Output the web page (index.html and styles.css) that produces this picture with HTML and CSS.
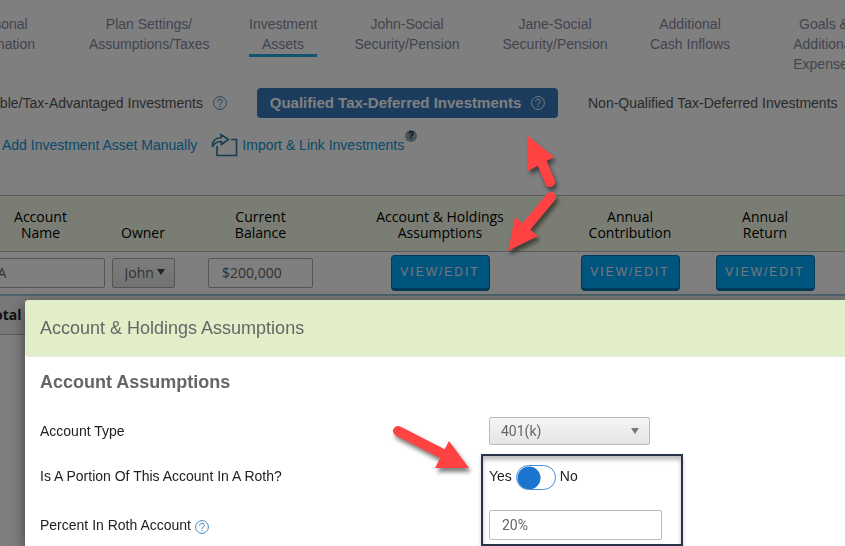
FILE: index.html
```html
<!DOCTYPE html>
<html lang="en">
<head>
    <meta charset="UTF-8">
    <meta name="viewport" content="width=device-width, initial-scale=1.0">
    <title>Investment Assets</title>
    <link rel="stylesheet" href="styles.css">
</head>
<body>
    <svg class="sprite" aria-hidden="true">
        <symbol id="help" viewBox="0 0 14 14">
            <circle cx="7" cy="7" r="6.4" fill="none" stroke="currentColor" stroke-width="0.9"/>
            <path d="M4.6 5.600C4.600 2.600 9.400 2.700 9.400 5.400C9.400 7.200 7 6.900 7 8.800M7 9.800V11" fill="none" stroke="currentColor"/>
        </symbol>
    </svg>

    <main class="page">
        <nav class="steps">
            <a href="#" class="step step-personal">Personal<br>Information</a>
            <a href="#" class="step step-plan">Plan Settings/<br>Assumptions/Taxes</a>
            <a href="#" class="step active">Investment<br>Assets</a>
            <a href="#" class="step step-wide">John-Social<br>Security/Pension</a>
            <a href="#" class="step step-wide">Jane-Social<br>Security/Pension</a>
            <a href="#" class="step step-cash">Additional<br>Cash Inflows</a>
            <a href="#" class="step step-goals">Goals &amp;<br>Additional<br>Expenses</a>
        </nav>

        <div class="tabs">
            <a href="#" class="tab tab-taxable">Taxable/Tax-Advantaged Investments <svg class="help"><use href="#help"/></svg></a>
            <a href="#" class="tab tab-selected">Qualified Tax-Deferred Investments <svg class="help"><use href="#help"/></svg></a>
            <a href="#" class="tab">Non-Qualified Tax-Deferred Investments</a>
        </div>

        <div class="actions">
            <a href="#">Add Investment Asset Manually</a>
            <a href="#" class="import-link">
                <svg class="import-icon" viewBox="0 0 27 24">
                    <path d="M20 6.500H25.500V22.500H6V13" fill="none" stroke="currentColor" stroke-width="1.6"/>
                    <path d="M1.500 14C1 8 4 5 10 4.800V1.500L17.500 6.500L10.500 11.500V8.500C6 8.500 3 10.500 1.500 14Z" fill="none" stroke="currentColor" stroke-width="1.6"/>
                </svg>
                Import &amp; Link Investments
            </a>
            <span class="badge">?</span>
        </div>

        <table class="assets">
            <colgroup>
                <col class="col-name"><col class="col-owner"><col class="col-balance"><col class="col-holdings"><col class="col-contribution"><col class="col-return"><col>
            </colgroup>
            <thead>
                <tr>
                    <th class="name-cell">Account<br>Name</th>
                    <th>Owner</th>
                    <th>Current<br>Balance</th>
                    <th>Account &amp; Holdings<br>Assumptions</th>
                    <th class="contribution-cell">Annual<br>Contribution</th>
                    <th>Annual<br>Return</th>
                    <th></th>
                </tr>
            </thead>
            <tbody>
                <tr>
                    <td class="name-cell"><input class="field name-field" type="text" value="IRA" aria-label="Account name"></td>
                    <td>
                        <span class="select-wrap owner-wrap">
                            <select class="owner-select" aria-label="Owner"><option>John</option></select>
                        </span>
                    </td>
                    <td><input class="field balance-field" type="text" value="$200,000" aria-label="Current balance"></td>
                    <td><button class="view-button">VIEW/EDIT</button></td>
                    <td class="contribution-cell"><button class="view-button">VIEW/EDIT</button></td>
                    <td><button class="view-button">VIEW/EDIT</button></td>
                    <td></td>
                </tr>
            </tbody>
            <tfoot>
                <tr>
                    <td class="total" colspan="7"><span>Total</span></td>
                </tr>
            </tfoot>
        </table>
    </main>

    <div class="overlay"></div>

    <section class="modal">
        <header class="modal-header">Account &amp; Holdings Assumptions</header>
        <div class="modal-body">
            <h2>Account Assumptions</h2>
            <div class="form-row row-type">
                <label for="accountType">Account Type</label>
                <span class="select-wrap type-wrap">
                    <select id="accountType" class="type-select"><option>401(k)</option></select>
                </span>
            </div>
            <div class="form-row row-roth">
                <label for="roth">Is A Portion Of This Account In A Roth?</label>
                <div class="toggle-group">
                    <span>Yes</span>
                    <input id="roth" class="toggle" type="checkbox">
                    <span>No</span>
                </div>
            </div>
            <div class="form-row row-percent">
                <label for="percent">Percent In Roth Account <svg class="help"><use href="#help"/></svg></label>
                <input id="percent" class="percent-field" type="text" value="20%">
            </div>
        </div>
    </section>

    <!-- callouts -->
    <div class="highlight"></div>
    <svg class="arrows" width="845" height="546" viewBox="0 0 845 546" aria-hidden="true">
        <path d="M550 182L540 158" /><path class="head" d="M528 136L554 157L528 171Z"/>
        <path d="M551 197L526 227" /><path class="head" d="M508 251L515 217L538 236Z"/>
        <path d="M398 431L445 455" /><path class="head" d="M469 468L449 441L435 468Z"/>
    </svg>
</body>
</html>
```
FILE: styles.css
```css
* {
    box-sizing: border-box;
}

body {
    margin: 0;
    height: 100vh;
    overflow: hidden;
    background: #fff;
    color: #555;
    font-family: "Liberation Sans", Arial, sans-serif;
    font-size: 14px;
    line-height: 20px;
}

a {
    color: inherit;
    text-decoration: none;
}

.sprite {
    display: none;
}

.page {
    overflow: hidden;
}

.steps {
    display: flex;
    height: 80px;
    padding-top: 14px;
    color: #85889f;
    text-align: center;
    white-space: nowrap;
}

.step {
    flex-shrink: 0;
}

.step-personal {
    width: 80px;
    margin-left: -40px;
    margin-right: 49px;
}

.step-plan {
    width: 120px;
    margin-right: 40px;
}

.active {
    width: 68px;
    height: 43px;
    margin-right: 23px;
    border-bottom: 3px solid #2ba9e0;
}

.step-wide {
    width: 134px;
}

.step-wide + .step-wide {
    margin-left: 14px;
}

.step-cash {
    width: 136px;
}

.step-goals {
    width: 132px;
}

.tabs {
    display: flex;
    align-items: center;
    height: 46px;
    white-space: nowrap;
}

.tab {
    display: flex;
    align-items: center;
    gap: 10px;
    height: 30px;
    flex-shrink: 0;
}

.tab-taxable {
    width: 257px;
    padding-right: 30px;
    justify-content: flex-end;
}

.tab-selected {
    width: 301px;
    margin-right: 30px;
    justify-content: center;
    border-radius: 4px;
    background: #3678ba;
    color: #fff;
    font-size: 15px;
    font-weight: bold;
}

.help {
    flex-shrink: 0;
    width: 14px;
    height: 14px;
    color: #337ab7;
}

.tab-selected .help {
    color: #fff;
}

.actions {
    display: flex;
    align-items: center;
    height: 69px;
    padding: 0 0 31px 2px;
    color: #0e94d4;
    white-space: nowrap;
}

.import-link {
    display: flex;
    align-items: center;
    gap: 4px;
    margin-left: 14px;
}

.import-icon {
    width: 27px;
    height: 24px;
    color: #2e7ba0;
}

.badge {
    width: 12px;
    height: 12px;
    margin: 0 0 18px 1px;
    border-radius: 50%;
    background: #92a9b8;
    color: #222;
    font-size: 10px;
    font-weight: bold;
    line-height: 12px;
    text-align: center;
}

.assets {
    width: 100%;
    border-collapse: collapse;
    table-layout: fixed;
    font-family: "Open Sans", "Noto Sans", sans-serif;
    text-align: center;
}

.col-name { width: 105px; }
.col-owner { width: 76px; }
.col-balance { width: 159px; }
.col-holdings { width: 200px; }
.col-contribution { width: 170px; }
.col-return { width: 110px; }

.assets th {
    height: 56px;
    padding: 0 0 10px;
    border-top: 1px solid #bbb;
    border-bottom: 1px solid #bbb;
    background: #f5fae6;
    color: #000;
    font-weight: normal;
    line-height: 16px;
    vertical-align: bottom;
    white-space: nowrap;
}

.assets th.name-cell {
    padding-right: 24px;
}

.assets td {
    height: 43px;
    padding: 0;
}

.assets .contribution-cell {
    padding-left: 10px;
}

.field {
    height: 30px;
    border: 1px solid #aaa;
    border-radius: 2px;
    background: #fff;
    color: #666;
    font-family: inherit;
    font-size: 14px;
}

.name-field {
    width: 125px;
    margin-left: -20px;
    padding: 0 0 0 4px;
}

.balance-field {
    width: 105px;
    padding: 0 13px;
}

.select-wrap {
    position: relative;
    display: inline-block;
}

.select-wrap::after {
    content: "";
    position: absolute;
    top: 11px;
    border-top: 6px solid #777;
    border-left: 4px solid transparent;
    border-right: 4px solid transparent;
    pointer-events: none;
}

.owner-wrap::after {
    right: 10px;
    border-top-color: #444;
}

.type-wrap::after {
    right: 11px;
}

.owner-select {
    display: block;
    width: 63px;
    height: 30px;
    border: 1px solid #aaa;
    border-radius: 2px;
    appearance: none;
    background: linear-gradient(#f8f8f8, #e5e5e5);
    color: #666;
    font-family: inherit;
    font-size: 14px;
    padding: 0 12px;
}

.view-button {
    display: block;
    width: 99px;
    height: 36px;
    margin: 0 auto;
    border: 1px solid #0475af;
    border-bottom: 3px solid #0475af;
    border-radius: 4px;
    background: #00aaff;
    color: #eee;
    font-family: "Liberation Sans", Arial, sans-serif;
    font-size: 12px;
    letter-spacing: 2px;
    padding: 0;
}

.assets td.total {
    height: 40px;
    border-top: 2px solid #9cc6da;
    border-bottom: 1px solid #bbb;
    background: #f0f0f0;
    color: #222;
    font-weight: bold;
    text-align: left;
}

.total span {
    margin-left: -14px;
}

.overlay {
    position: fixed;
    inset: 0;
    background: rgba(0, 0, 0, 0.5);
}

.modal {
    position: fixed;
    top: 300px;
    left: 25px;
    right: 0;
    bottom: 0;
    border-radius: 4px 0 0 0;
    background: #fff;
    box-shadow: 0 5px 15px rgba(0, 0, 0, 0.5);
}

.modal-header {
    height: 57px;
    padding: 18px 15px;
    border-bottom: 1px solid #e5e5e5;
    border-radius: 4px 0 0 4px;
    background: #e1eec8;
    color: #666;
    font-size: 18px;
}

.modal-body {
    padding: 15px;
    color: #222;
}

.modal-body h2 {
    margin: 0 0 25px;
    color: #666;
    font-size: 18px;
    line-height: 20px;
}

.form-row {
    display: grid;
    grid-template-columns: 449px auto;
    align-items: center;
    justify-content: start;
}

.row-type { height: 28px; }
.row-roth { height: 65px; }
.row-percent { height: 30px; }

.row-roth label,
.toggle-group span {
    padding-bottom: 3px;
}

.row-percent .help {
    vertical-align: -4px;
}

.type-select {
    display: block;
    width: 161px;
    height: 28px;
    padding: 0 11px;
    appearance: none;
    border: 1px solid #bbb;
    border-radius: 2px;
    background: linear-gradient(#f5f5f5, #e5e5e5);
    color: #666;
    font-family: Roboto, sans-serif;
    font-size: 14px;
}

.toggle-group {
    display: flex;
    align-items: center;
    gap: 4px;
}

.toggle {
    width: 40px;
    height: 25px;
    margin: 0;
    appearance: none;
    border: 1px solid #4a90d0;
    border-radius: 13px;
    background: radial-gradient(circle at 12px 12px, #1b75d0 11px, #fff 12px);
}

.percent-field {
    width: 173px;
    height: 30px;
    padding: 0 12px;
    border: 1px solid #bbb;
    border-radius: 2px;
    color: #666;
    font-family: Roboto, sans-serif;
    font-size: 14px;
}

.highlight {
    position: fixed;
    top: 454px;
    left: 481px;
    width: 202px;
    height: 92px;
    border: 2px solid #28334a;
    box-shadow: inset 0 4px 4px rgba(0, 0, 0, 0.25), 0 3px 4px rgba(0, 0, 0, 0.2);
    pointer-events: none;
}

.arrows {
    position: fixed;
    top: 0;
    left: 0;
    fill: none;
    stroke: #ff4343;
    stroke-width: 10;
    stroke-linecap: round;
    filter: drop-shadow(2px 4px 2px rgba(0, 0, 0, 0.5));
    pointer-events: none;
}

.arrows .head {
    fill: #ff4343;
    stroke: none;
}
```
